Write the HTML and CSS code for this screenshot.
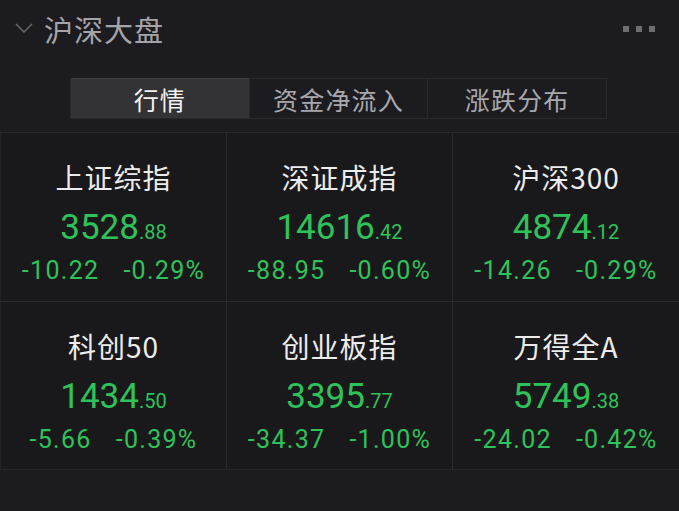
FILE: index.html
```html
<!DOCTYPE html>
<html lang="zh-CN">
<head>
<meta charset="utf-8">
<link rel="stylesheet" href="styles.css">
</head>
<body>
<div class="page">
  <div class="header">
    <svg class="chev" width="18" height="12" viewBox="0 0 18 12"><path d="M1 2 L9 10 L17 2" fill="none" stroke="#6c6c70" stroke-width="1.4"/></svg>
    <span class="title">沪深大盘</span>
    <div class="dots"><i></i><i></i><i></i></div>
  </div>
  <div class="tabs">
    <div class="tab active">行情</div>
    <div class="tab">资金净流入</div>
    <div class="tab">涨跌分布</div>
  </div>
  <div class="grid">
    <div class="cell"><div class="name">上证综指</div><div class="price">3528<small>.88</small></div><div class="chg"><span>-10.22</span><span>-0.29%</span></div></div>
    <div class="cell"><div class="name">深证成指</div><div class="price">14616<small>.42</small></div><div class="chg"><span>-88.95</span><span>-0.60%</span></div></div>
    <div class="cell"><div class="name">沪深300</div><div class="price">4874<small>.12</small></div><div class="chg"><span>-14.26</span><span>-0.29%</span></div></div>
    <div class="cell"><div class="name">科创50</div><div class="price">1434<small>.50</small></div><div class="chg"><span>-5.66</span><span>-0.39%</span></div></div>
    <div class="cell"><div class="name">创业板指</div><div class="price">3395<small>.77</small></div><div class="chg"><span>-34.37</span><span>-1.00%</span></div></div>
    <div class="cell"><div class="name">万得全A</div><div class="price">5749<small>.38</small></div><div class="chg"><span>-24.02</span><span>-0.42%</span></div></div>
  </div>
</div>
</body>
</html>
```
FILE: styles.css
```css
html, body {
  margin: 0;
  padding: 0;
  background: #1c1b1f;
}
.page {
  width: 679px;
  height: 511px;
  overflow: hidden;
  font-family: "Noto Sans CJK SC", "Noto Sans", sans-serif;
}
.header {
  height: 60px;
  display: flex;
  align-items: center;
  padding: 0 24px 0 15px;
}
.chev {
  margin-right: 11px;
  margin-top: -4px;
}
.title {
  font-size: 29px;
  color: #a4a4a8;
  letter-spacing: 1px;
  line-height: 1;
  margin-top: -2px;
}
.dots {
  margin-left: auto;
  display: flex;
  gap: 7px;
  margin-top: -3px;
}
.dots i {
  display: block;
  width: 6px;
  height: 6px;
  background: #6e6e72;
}
.tabs {
  margin: 18px 0 0 70px;
  width: 537px;
  height: 41px;
  display: flex;
  border: 1px solid #29292c;
  box-sizing: border-box;
}
.tab {
  flex: 1;
  display: flex;
  align-items: center;
  justify-content: center;
  font-size: 25px;
  color: #a8a8ac;
  border-left: 1px solid #29292c;
  letter-spacing: 1.2px;
}
.tab:first-child { border-left: none; }
.tab.active {
  background: #333336;
  color: #f2f2f2;
  border-top: 1px solid #404044;
  margin-top: -1px;
}
.grid {
  margin-top: 13px;
  display: grid;
  grid-template-columns: 226px 226px 227px;
  grid-template-rows: 168px 168px;
  border-top: 1px solid #2a2a2d;
  border-bottom: 1px solid #262629;
  background: #19191b;
}
.cell {
  display: flex;
  flex-direction: column;
  align-items: center;
  border-left: 1px solid #2a2a2d;
  border-top: 1px solid #2a2a2d;
  padding-top: 27px;
  box-sizing: border-box;
}
.cell:nth-child(-n+3) { border-top: none; }
.cell:nth-child(3n+1) { border-left: 1px solid #222225; }
.name {
  font-size: 28px;
  color: #ececec;
  line-height: 34px;
  letter-spacing: 1px;
}
.price {
  font-family: Roboto, "Noto Sans", sans-serif;
  font-size: 35px;
  color: #30c25a;
  line-height: 40px;
  margin-top: 14px;
}
.price small {
  font-size: 20px;
}
.chg {
  font-family: Roboto, "Noto Sans", sans-serif;
  font-size: 25px;
  color: #30c25a;
  line-height: 30px;
  margin-top: 4px;
  display: flex;
  gap: 24px;
  letter-spacing: 1.3px;
}
```
